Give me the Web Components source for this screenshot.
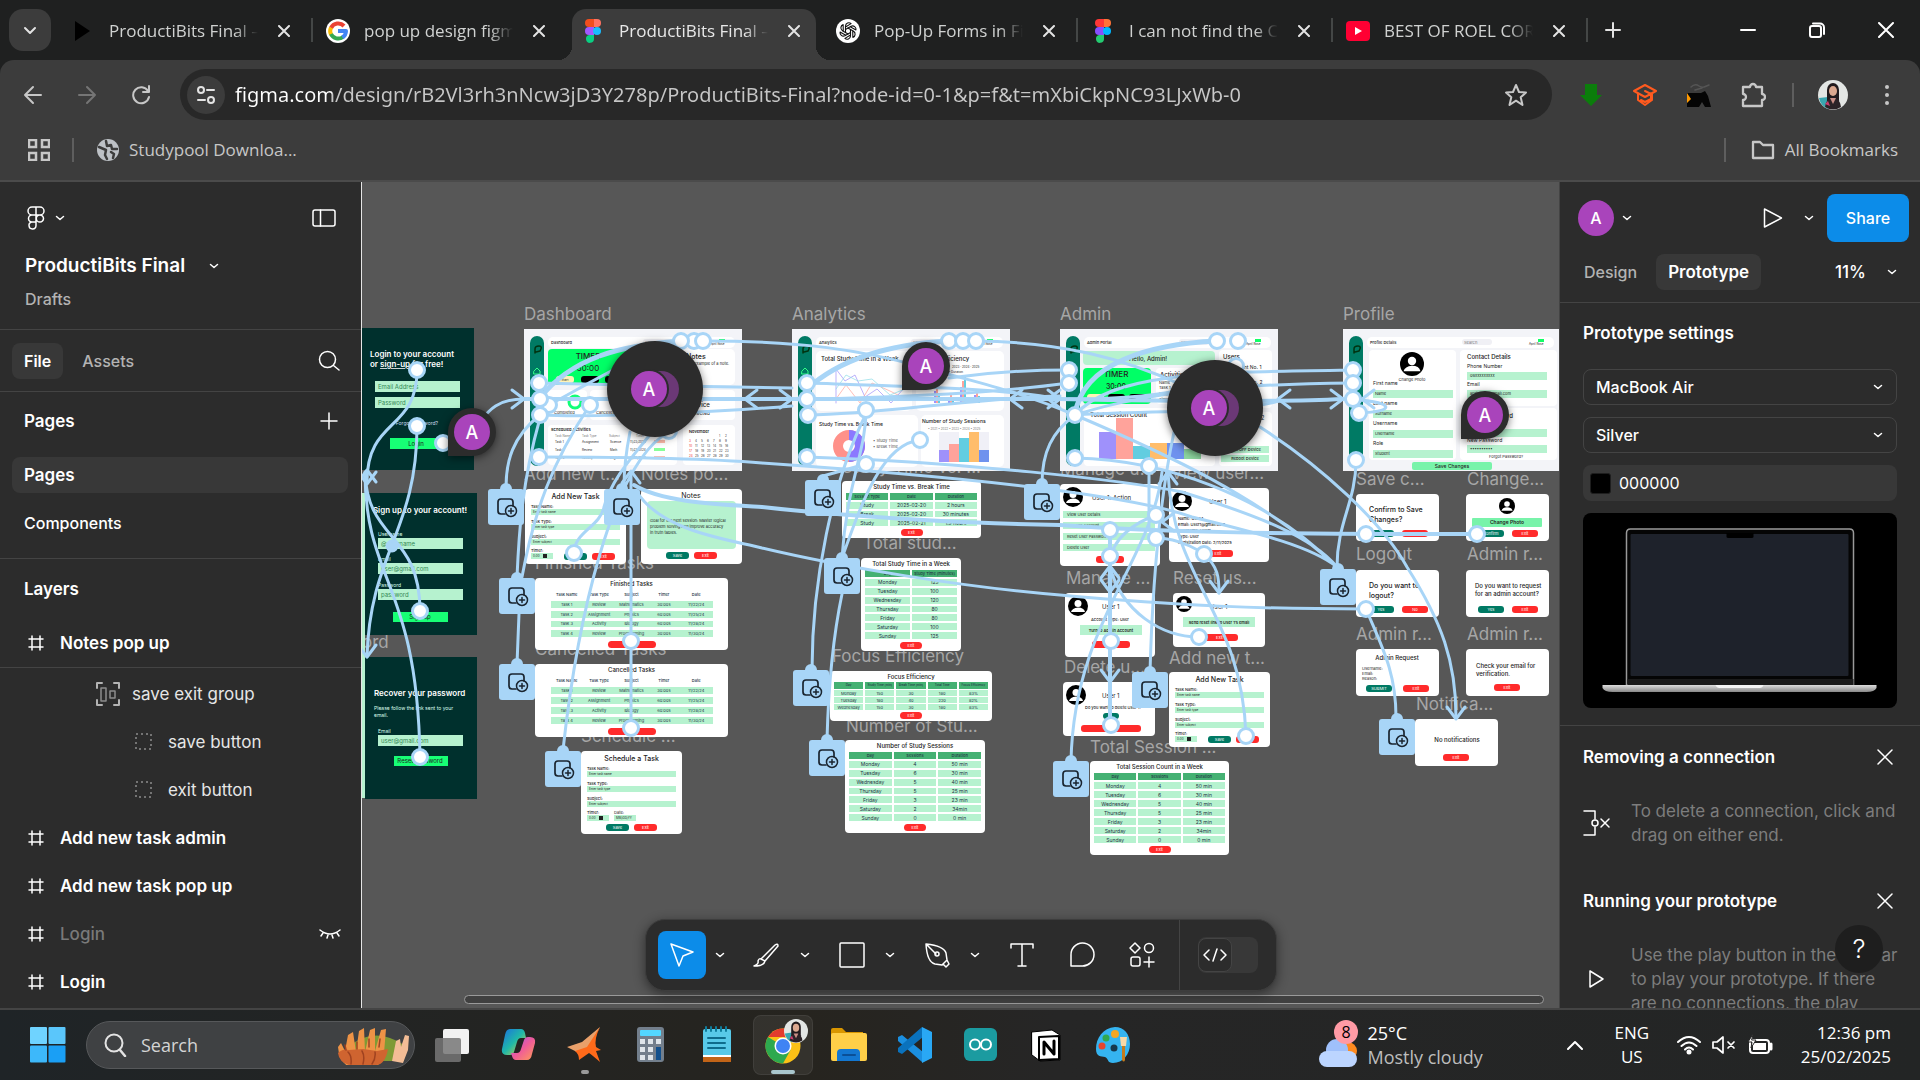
<!DOCTYPE html>
<html lang="en">
<head>
<meta charset="utf-8">
<title>ProductiBits Final – Figma</title>
<style>
html,body{margin:0;height:100%}
body{display:flex;flex-direction:column;height:100vh;overflow:hidden;background:#2c2c2c;color:#fff;font-family:"Open Sans","Noto Sans",sans-serif}
</style>
</head>
<body>
<browser-tabs></browser-tabs>
<browser-toolbar></browser-toolbar>
<bookmark-bar></bookmark-bar>
<figma-app></figma-app>
<task-bar></task-bar>
<script>
const BASE = `:host,*{box-sizing:border-box}:host{flex:none}button{font:inherit;color:inherit;background:none;border:0;padding:0;margin:0;display:flex;align-items:center;justify-content:center;flex:none}svg{display:block;flex:none}section{flex:none}h1,h2,h3,p,ul{margin:0;padding:0;font-size:inherit;font-weight:inherit}li{list-style:none}`;
const define = (name, css, html) => customElements.define(name, class extends HTMLElement {
  constructor(){ super(); this.attachShadow({mode:'open'}); }
  connectedCallback(){
    if (this.shadowRoot.childNodes.length) return;
    const t = document.createElement('template');
    t.innerHTML = `<style>${BASE}${css}</style>` + (typeof html === 'function' ? html(this) : html);
    this.shadowRoot.append(t.content.cloneNode(true));
  }
});
const svg = (w, h, body, vb) => `<svg width="${w}" height="${h}" viewBox="${vb || `0 0 ${w} ${h}`}" fill="none" stroke-linecap="round" stroke-linejoin="round" aria-hidden="true">${body}</svg>`;

/* ---------- shared icons ---------- */
const FIG = (a,b,c,d,e) => `<path fill="${a}" d="M10 0H5a4 4 0 000 8h5z"/><path fill="${b}" d="M10 0h3a4 4 0 010 8h-3z"/><path fill="${c}" d="M10 8H5a4 4 0 000 8h5z"/><circle fill="${d}" cx="13" cy="12" r="4"/><path fill="${e}" d="M5 16h5v4a4 4 0 11-5-4z"/>`;
const FACE = `<circle cx="15" cy="15" r="15" fill="#e3e6e4"/><path d="M1 18a15 15 0 009 11V17z" fill="#3aa6b0"/><path d="M9 24V10a6 7 0 0112 0v14z" fill="#211a1d"/><ellipse cx="15" cy="11" rx="4" ry="5" fill="#dba88f"/><path d="M7 27q1-9 8-9t8 9a15 15 0 01-16 0z" fill="#2b2327"/><path d="M12 18h6l-3 6z" fill="#c98f86"/><path d="M7 24l3-3 2 5z" fill="#cf3d70"/>`;
const ICONS = {
  play: svg(18,24,`<path fill="#000" d="M1 2l15 10L1 22z"/>`),
  google: svg(24,24,`<circle cx="12" cy="12" r="12" fill="#fff"/><g stroke-width="4" stroke-linecap="butt"><path stroke="#ea4335" d="M18 7A8 8 0 005 9"/><path stroke="#fbbc05" d="M5 8.500a8 8 0 000 7"/><path stroke="#34a853" d="M5 15a8 8 0 0012 3"/><path stroke="#4285f4" d="M16.500 18.500A8 8 0 0020 12h-8"/></g>`),
  figma: svg(18,24,FIG('#f24e1e','#ff7262','#a259ff','#1abcfe','#0acf83')),
  figma2: svg(18,24,FIG('#ff3737','#ff7237','#874fff','#00b6ff','#24cb71')),
  gpt: svg(24,24,`<circle cx="12" cy="12" r="12" fill="#fff"/><g stroke="#111" stroke-width="1.100">${[0,60,120,180,240,300].map(a=>`<path transform="rotate(${a} 12 12)" d="M9.500 13.500V7a3.400 3.400 0 015.600-2.400L9.500 8"/>`).join('')}</g>`),
  yt: svg(24,20,`<rect width="24" height="20" rx="4" fill="#f03"/><path fill="#fff" d="M9 6l7 4-7 4z"/>`)
};
define('chevron-down', `:host{display:block}`, el => svg(10,6,`<path d="M1.500 1.500L5 4.500l3.500-3" stroke="${el.getAttribute('color')||'#fff'}" stroke-width="1.500"/>`));

/* ---------- browser chrome ---------- */
define('browser-tab', `
:host{display:flex;align-items:center;width:255px;height:51px;padding:0 18px 0 15px;position:relative;color:#d0d2d1;font-size:17px}
:host([active]){color:#e8e8e8}
:host([active])::before{content:"";position:absolute;inset:0 7px 0 4px;background:#3c3c3c;border-radius:14px 14px 0 0}
:host([active])::after{content:"";position:absolute;left:-10px;right:-7px;bottom:0;height:14px;background:radial-gradient(circle at 0 0,transparent 14px,#3c3c3c 14px) left/14px 14px no-repeat,radial-gradient(circle at 14px 0,transparent 14px,#3c3c3c 14px) right/14px 14px no-repeat}
:host([sep])::after{content:"";position:absolute;right:0;top:9px;width:2px;height:24px;background:#444746}
.icon{width:20px;display:flex;justify-content:center;position:relative}
.title{flex:1;white-space:nowrap;overflow:hidden;margin:0 15px 0 16px;position:relative;line-height:26px;-webkit-mask-image:linear-gradient(90deg,#000 84%,transparent)}
button{width:22px;height:22px;position:relative}
.icon,.title,button{top:-4px}`,
 el => `<span class="icon">${ICONS[el.getAttribute('icon')]}</span><span class="title"><slot></slot></span><button aria-label="Close tab">${svg(12,12,'<path d="M1 1l10 10M11 1L1 11" stroke="#e3e3e3" stroke-width="2"/>')}</button>`);

define('browser-tabs', `
:host{display:flex;height:74px;margin-bottom:-14px;background:#1f2020;padding:9px 0 0 9px;align-items:flex-start}
.menu{width:42px;height:42px;border-radius:14px;background:#3c3c3c;margin-right:7px}
.plus{width:36px;height:42px;margin-left:7px}
.win{margin-left:auto;display:flex}.win button{width:69px;height:42px}`,
`<button class="menu" aria-label="Search tabs">${svg(14,9,'<path d="M2 2l5 5 5-5" stroke="#e3e3e3" stroke-width="2"/>')}</button>
<browser-tab icon="play" sep>ProductiBits Final – Figma</browser-tab><browser-tab icon="google">pop up design figma</browser-tab><browser-tab icon="figma" active>ProductiBits Final – Figma</browser-tab><browser-tab icon="gpt" sep>Pop-Up Forms in Figma</browser-tab><browser-tab icon="figma2" sep>I can not find the Close</browser-tab><browser-tab icon="yt" sep>BEST OF ROEL CORTEZ</browser-tab>
<button class="plus" aria-label="New tab">${svg(16,16,'<path d="M8 1v14M1 8h14" stroke="#e3e3e3" stroke-width="2"/>')}</button>
<div class="win"><button aria-label="Minimise">${svg(16,16,'<path d="M1 8h14" stroke="#fff" stroke-width="2"/>')}</button><button aria-label="Restore">${svg(16,16,'<rect x="1" y="4" width="11" height="11" rx="2" stroke="#fff" stroke-width="2"/><path d="M4 1.500h7a4 4 0 014 4V12" stroke="#fff" stroke-width="2"/>')}</button><button aria-label="Close">${svg(16,16,'<path d="M1 1l14 14M15 1L1 15" stroke="#fff" stroke-width="2"/>')}</button></div>`);

define('browser-toolbar', `
:host{display:flex;align-items:center;height:69px;background:#3c3c3c;border-radius:14px 14px 0 0;padding:0 6px;z-index:1}
.nav{width:54px;height:44px}
.box{flex:1;display:flex;align-items:center;height:51px;border-radius:26px;background:#282828;margin:0 12px;padding:0 24px 0 7px}
.site{width:38px;height:38px;border-radius:50%;background:#3c3c3c}
label{flex:1;display:flex}
input{flex:1;margin:0 0 0 10px;padding:0;border:0;height:32px;font:20px "Noto Sans",sans-serif;color:#c7c7c7;background:linear-gradient(90deg,#fff 97px,#c7c7c7 97px);-webkit-background-clip:text;background-clip:text;-webkit-text-fill-color:transparent;outline:0}
.ext{width:54px;height:44px}.sep{width:2px;height:24px;background:#5e5e5e;margin:0 12px}`,
`<button class="nav" aria-label="Back">${svg(20,20,'<path d="M18 10H2M10 2l-8 8 8 8" stroke="#c7c7c7" stroke-width="2"/>')}</button>
<button class="nav" aria-label="Forward">${svg(20,20,'<path d="M2 10h16M10 2l8 8-8 8" stroke="#757575" stroke-width="2"/>')}</button>
<button class="nav" aria-label="Reload">${svg(20,20,'<path d="M17 6a8 8 0 101 6M18 1v6h-6" stroke="#c7c7c7" stroke-width="2"/>')}</button>
<div class="box"><button class="site" aria-label="Site information">${svg(20,20,'<g stroke="#e3e3e3" stroke-width="2"><circle cx="5" cy="5" r="3"/><path d="M11 5h7M2 15h7"/><circle cx="15" cy="15" r="3"/></g>')}</button><label><input aria-label="Address" value="figma.com/design/rB2Vl3rh3nNcw3jD3Y278p/ProductiBits-Final?node-id=0-1&amp;p=f&amp;t=mXbiCkpNC93LJxWb-0"></label><button aria-label="Bookmark">${svg(24,24,'<path d="M12 2l3 7 7 .600-5.300 4.700L18.500 22 12 17.700 5.500 22l1.800-7.700L2 9.600 9 9z" stroke="#c7c7c7" stroke-width="2"/>')}</button></div>
<button class="ext" aria-label="Downloader">${svg(24,24,'<path d="M6 1h12v11h5L12 23 1 12h5z" fill="#0b7d0b"/>')}</button>
<button class="ext" aria-label="Studypool">${svg(26,22,'<path d="M13 1l11 6-11 6L2 7zM6 10v6l7 5 7-5v-6M13 7l6 3v5l-6 3-4-2" stroke="#ff5a1f" stroke-width="2"/>')}</button>
<button class="ext" aria-label="Helper">${svg(26,26,'<path d="M1 11h14l4-2 3 5 3 11h-6l-3-5-3 5H1z" fill="#050505"/><path d="M1 11l4 6-4 4z" fill="#f90"/><path d="M5 5q4-4 8-1t10-1M18 5l5-2M9 8l7-2" stroke="#555" stroke-width="1.500"/>')}</button>
<button class="ext" aria-label="Extensions">${svg(26,26,'<path d="M3 5h7a3 3 0 016 0h6v7a3 3 0 010 6v6H3v-6a3 3 0 000-6z" stroke="#c7c7c7" stroke-width="2.300"/>')}</button>
<span class="sep"></span><button class="ext" aria-label="Profile">${svg(30,30,FACE)}</button><button class="ext" aria-label="Menu">${svg(6,22,'<g fill="#c7c7c7"><circle cx="3" cy="3" r="2"/><circle cx="3" cy="11" r="2"/><circle cx="3" cy="19" r="2"/></g>')}</button>`);

define('bookmark-bar', `
:host{display:flex;align-items:center;height:53px;background:#3c3c3c;padding:0 22px 10px 28px;border-bottom:2px solid #4b4b4b;font-size:17px;color:#c7c7c7}
.sep{width:2px;height:24px;background:#5e5e5e}a{display:flex;align-items:center;gap:10px;color:inherit;text-decoration:none}`,
`<button aria-label="Apps">${svg(22,22,'<g stroke="#c7c7c7" stroke-width="2.500" stroke-linejoin="miter"><rect x="1" y="1" width="7" height="7"/><rect x="14" y="1" width="7" height="7"/><rect x="1" y="14" width="7" height="7"/><rect x="14" y="14" width="7" height="7"/></g>')}</button>
<span class="sep" style="margin:0 23px 0 22px"></span><a href="#">${svg(22,22,'<circle cx="11" cy="11" r="11" fill="#bdc1c6"/><path d="M2 8l7 3-1 5 2 4M9 2l1 5 4-1 1 4h5M14 13l3 2-1 4" stroke="#3c3c3c" stroke-width="2.500"/>')}<span>Studypool Downloa...</span></a>
<span class="sep" style="margin:0 25px 0 auto"></span><a href="#">${svg(24,20,'<path d="M2 2h7l3 3h10v13H2z" stroke="#c7c7c7" stroke-width="2.300"/>')}<span>All Bookmarks</span></a>`);

/* ---------- left panel ---------- */
const HASH = svg(24,24,'<path d="M8 5v14M16 5v14M5 8h14M5 16h14" stroke="#fff" stroke-width="1.500"/>');
const DASH = svg(24,24,'<rect x="4" y="4" width="15" height="15" stroke="#8c8c8c" stroke-width="1.500" stroke-dasharray="2 3" stroke-linecap="butt"/>');
const GROUP = svg(24,24,'<path d="M1 6V1h5M18 1h5v5M23 18v5h-5M6 23H1v-5" stroke="#b3b3b3" stroke-width="2"/><rect x="5" y="6" width="5" height="13" stroke="#8c8c8c" stroke-width="1.500"/><rect x="14" y="9" width="5" height="7" stroke="#8c8c8c" stroke-width="1.500"/>');
define('layer-row', `
:host{display:flex;align-items:center;height:48px;padding:0 20px 0 calc(24px + var(--indent,0px));gap:12px;font-size:17px;font-weight:400;color:#e6e6e6}
:host([top]){font-weight:600;color:#fff}:host([dim]){color:#7a7a7a;font-weight:500}
button{flex:1;justify-content:flex-start;white-space:nowrap}`,
 el => ({hash:HASH,dash:DASH,group:GROUP})[el.getAttribute('icon')] + `<button><slot></slot></button>` + (el.hasAttribute('dim') ? svg(22,12,'<path d="M1 2q10 8 20 0M4 5L2 8M9 7l-1 3M13 7l1 3M18 5l2 3" stroke="#fff" stroke-width="1.500"/>') : ''));

define('left-panel', `
:host{display:flex;flex-direction:column;width:362px;background:#2c2c2c;border-right:1px solid #e6e6e6;font:16px/24px Inter,sans-serif;overflow:hidden}
section{border-bottom:1px solid #444}
.head{height:148px;padding:18px 25px 0 25px}.row{display:flex;align-items:center}
.row button{height:36px}h1{font-size:19px;font-weight:600}h2{font-size:17px}
.sub{color:#b3b3b3;font-weight:500;padding-top:3px}
.tabs{display:flex;align-items:center;height:62px;padding:0 21px 0 12px;font-weight:500;color:#b3b3b3;gap:7px}
.tabs button{height:36px;padding:0 12px;border-radius:8px}.tabs .on{background:#383838;color:#fff;font-weight:600}
.pages{height:167px;padding:0 13px 0 12px}.pages .row{height:58px;padding:0 10px 0 12px;font-weight:600;justify-content:space-between}
.pages .pg{width:100%;height:36px;margin:7px 0 12px;justify-content:flex-start;padding:0 12px;border-radius:8px;font-weight:500}
.pages .on{background:#383838;font-weight:600;font-size:17px}
.layers{height:109px;font-weight:600}.layers h2{padding:18px 24px 18px}
ul{flex:1;padding-top:2px;overflow:hidden}`,
`<section class="head"><div class="row"><button aria-label="Main menu">${svg(22,24,'<path d="M11 1H7a4 4 0 000 8h4zM11 1h4a4 4 0 010 8h-4zM11 9H7a3.500 3.500 0 000 7h4zM7 16a3.500 3.500 0 104 3.500V9M18.500 12.500a3.600 3.600 0 11-7.200 0 3.600 3.600 0 017.200 0z" stroke="#fff" stroke-width="1.500"/>')}<chevron-down style="margin-left:8px"></chevron-down></button><span style="flex:1"></span><button aria-label="Minimise UI">${svg(24,18,'<rect x="1" y="1" width="22" height="16" rx="2" stroke="#fff" stroke-width="1.500"/><path d="M8.500 1v16" stroke="#fff" stroke-width="1.500"/>')}</button></div>
<div class="row" style="padding-top:12px"><h1>ProductiBits Final</h1><button aria-label="File menu" style="margin-left:24px"><chevron-down></chevron-down></button></div><p class="sub">Drafts</p></section>
<section class="tabs"><button class="on">File</button><button>Assets</button><span style="flex:1"></span>${svg(22,22,'<circle cx="9.500" cy="9.500" r="8" stroke="#fff" stroke-width="1.500"/><path d="M15.500 15.500L21 20" stroke="#fff" stroke-width="1.500"/>')}</section>
<section class="pages"><div class="row"><h2>Pages</h2><button aria-label="Add page">${svg(18,18,'<path d="M9 1v16M1 9h16" stroke="#fff" stroke-width="1.500"/>')}</button></div><button class="pg on">Pages</button><button class="pg">Components</button></section>
<section class="layers"><h2>Layers</h2><layer-row icon="hash" top>Notes pop up</layer-row></section>
<ul><layer-row icon="group" style="--indent:72px">save exit group</layer-row><layer-row icon="dash" style="--indent:108px">save button</layer-row><layer-row icon="dash" style="--indent:108px">exit button</layer-row><layer-row icon="hash" top>Add new task admin</layer-row><layer-row icon="hash" top>Add new task pop up</layer-row><layer-row icon="hash" top dim>Login</layer-row><layer-row icon="hash" top>Login</layer-row></ul>`);

/* ---------- right panel ---------- */
define('select-box', `
:host{display:flex;position:relative;height:36px;margin-bottom:12px}
select{appearance:none;flex:1;background:none;border:1px solid #444;border-radius:8px;color:#fff;font:500 16px Inter,sans-serif;padding:0 12px}
chevron-down{position:absolute;right:14px;top:15px}`,
 el => `<select aria-label="${el.getAttribute('label')}"><option>${el.getAttribute('value')}</option></select><chevron-down></chevron-down>`);
define('hint-block', `
:host{display:block;height:144px}
header{display:flex;align-items:center;justify-content:space-between;height:36px;padding:0 23px;font-size:17px;font-weight:600}
header button{width:24px;height:24px}
div{display:flex;align-items:center;padding:24px 0 0 23px;color:#7d7d7d;font-size:17px}
p{width:270px;margin-left:20px}`,
 el => `<header><h3>${el.getAttribute('heading')}</h3><button aria-label="Dismiss">${svg(16,16,'<path d="M1 1l14 14M15 1L1 15" stroke="#fff" stroke-width="1.500"/>')}</button></header><div>${el.getAttribute('icon')==='cut' ? svg(28,26,'<g stroke="#fff" stroke-width="1.500"><path d="M1 1h11v8M12 17v8H1"/><circle cx="12" cy="13" r="3"/><path d="M18 9l8 8M26 9l-8 8"/></g>') : svg(28,26,'<path d="M7 5v16l13-8z" stroke="#fff" stroke-width="1.500"/>')}<p><slot></slot></p></div>`);
define('right-panel', `
:host{display:flex;flex-direction:column;width:361px;background:#2c2c2c;border-left:1px solid #444;font:16px/24px Inter,sans-serif;overflow:hidden;position:relative}
.top{display:flex;align-items:center;height:72px;padding:0 11px 0 18px;flex:none}
.av{width:36px;height:36px;border-radius:50%;background:#a944bb;font-weight:500}
.share{width:82px;height:48px;border-radius:8px;background:#0c8ce9;font-weight:500;margin-left:13px}
.tabs{display:flex;align-items:center;height:49px;padding:0 23px 12px 12px;border-bottom:1px solid #444;font-weight:500;color:#b3b3b3;flex:none}
.tabs button{height:36px;padding:0 12px;border-radius:8px}.tabs .on{background:#383838;color:#fff;font-weight:600;margin-left:7px;font-size:17px}
.set{padding:18px 23px 17px 23px;border-bottom:1px solid #444;height:423px}h2{font-size:17px;font-weight:600;margin-bottom:24px}
.col{display:flex;align-items:center;height:36px;border-radius:8px;background:#383838;padding-left:7px;margin-bottom:12px}
.sw{width:21px;height:21px;border-radius:3px;background:#000;border:1px solid #1e1e1e}
input{flex:1;min-width:0;background:none;border:0;color:#fff;font:16px Inter,sans-serif;padding:0 8px}
.prev{background:#000;border-radius:8px;height:195px}.prev svg{width:100%}
hint-block:first-of-type{margin-top:13px}
.help{position:absolute;right:37px;bottom:35px;width:48px;height:48px;border-radius:50%;background:#1e1e1e;font-size:26px;font-weight:300}`,
`<div class="top"><button class="av" aria-label="Account">A</button><chevron-down style="margin-left:8px"></chevron-down><span style="flex:1"></span><button aria-label="Present">${svg(20,22,'<path d="M1.500 2v18L18.500 11z" stroke="#fff" stroke-width="1.500"/>')}</button><chevron-down style="margin-left:21px"></chevron-down><button class="share">Share</button></div>
<div class="tabs"><button>Design</button><button class="on">Prototype</button><span style="flex:1"></span><span style="color:#fff;font-size:17px">11%</span><chevron-down style="margin-left:21px"></chevron-down></div>
<section class="set"><h2>Prototype settings</h2><select-box label="Device" value="MacBook Air"></select-box><select-box label="Colour" value="Silver"></select-box>
<label class="col"><span class="sw"></span><input aria-label="Background" value="000000"></label>
<div class="prev">${svg(313,195,`<defs><linearGradient id="b" x2="0" y2="1"><stop stop-color="#ddd"/><stop offset="1" stop-color="#888"/></linearGradient></defs><path d="M43 172V20q0-4 4-4h219q4 0 4 4v152z" fill="#050505" stroke="#999" stroke-width="1.500"/><rect x="47" y="21" width="218" height="142" rx="1" fill="#1e222b"/><path d="M143 20h27v4q0 1-2 1h-23q-2 0-2-1z" fill="#000"/><rect x="44" y="166" width="226" height="6" fill="#1b1b1b"/><path d="M19 172h274v3q-2 4-10 4H29q-8 0-10-4z" fill="url(#b)"/><path d="M132 172h48q-1 3-4 3h-40q-3 0-4-3z" fill="#f4f4f4"/>`)}</div></section>
<hint-block heading="Removing a connection" icon="cut">To delete a connection, click and drag on either end.</hint-block>
<hint-block heading="Running your prototype" icon="play">Use the play button in the toolbar to play your prototype. If there are no connections, the play</hint-block>
<button class="help" aria-label="Help">?</button>`);

/* ---------- canvas: drawing helpers ---------- */
const G='#b6f2cf', DG='#007a64', RED='#ff2b2b', WIRE='#a8d5f7';
const T=(x,y,s,z,o={})=>`<text x="${x}" y="${y}" font-size="${z}" fill="${o.f||'#222'}" text-anchor="${o.a||'start'}" font-weight="${o.w||400}">${s}</text>`;
const M=(x,y,s,z,o={})=>T(x,y,s,z,{...o,a:'middle'});
const R=(x,y,w,h,f,r=0)=>`<rect x="${x}" y="${y}" width="${w}" height="${h}" rx="${r}" fill="${f}"/>`;
const USER=(x,y,r)=>`<circle cx="${x}" cy="${y}" r="${r}" fill="#000"/><circle cx="${x}" cy="${y-r*.250}" r="${r*.350}" fill="#fff"/><path d="M${x-r*.700} ${y+r*.600}q${r*.100} ${-r*.400} ${r*.700} ${-r*.450}q${r*.600} 0 ${r*.700} ${r*.450}z" fill="#fff"/>`;
const PILL=(x,y,w,s,f)=>R(x,y,w,7,f,3)+M(x+w/2,y+5,s,4,{f:'#fff'});
const shell=t=>R(6,7,14,130,DG,7)+`<path d="M11 24v-4q0-3 4-3t1 5l-4 1" stroke="#031" stroke-width="1.500"/><path d="M10 42l3-3 3 3v3h-6z" stroke="#3f8" stroke-width="1"/>`+R(24,8,187,11,'#fff',5)+T(27,15,t,4,{w:500})+R(119,10,30,6,'#f0f0f5',3)+T(121,15,'Search',4,{f:'#777'})+R(195,10,6,3,'#1f6')+T(186,16,'April Rose',3);
const form=(title,w,date)=>M(w/2,10,title,7,{w:500})+[['Task Name:','Enter task name'],['Task Type:','Enter task type'],['Subject:','Enter subject']].map((r,i)=>T(6,19+i*15,r[0],4,{w:500})+R(6,20+i*15,w-12,6,G)+T(8,24+i*15,r[1],3)).join('')+T(6,63,'Timer:',4,{w:500})+R(6,64,22,6,G)+T(8,68,'0:00',3)+R(18,65,4,4,'#222')+(date?T(33,63,'Date:',4)+R(33,64,22,6,G)+T(35,68,'MM/DD/YY',3)+PILL(25,73,23,'Save',DG)+PILL(53,73,23,'Exit',RED):PILL(39,64,23,'Save',DG)+PILL(67,64,23,'Exit',RED));
const login=(w,parts)=>R(0,0,w,142,'#00302d')+parts;
const field=(x,y,s,l)=>R(x,y,85,11,G)+T(x+3,y+8,s,6,{f:'#385'})+(l?T(x,y-2,l,5,{f:'#dfe'}):'');

const bars=(x,base,w,hs)=>hs.map((h,i)=>R(x+i*w,base-h,w,h,['#9f91fb','#ffa39b','#62cde0','#ffbd6b','#6f92ee','#8ed8a0'][i])).join('');
const chart=x=>`<g transform="translate(${x})"><path d="M0 74V40l9 12 10-6 10 22 12-8 14 14 14-16" stroke="#9f91fb" stroke-width=".7"/><path d="M0 70l10-14 14 18 12-20 18 8 16 8" stroke="#ffa39b" stroke-width=".7"/><path d="M0 60l10-14 12 6 14-2 18 16 20-8" stroke="#8cdbe6" stroke-width=".7"/></g>`;
const ART = {
 login: login(112,M(50,29,'Login to your account',8,{f:'#fff',w:600})+T(8,39,'or <tspan text-decoration="underline">sign-up</tspan> for free!',8,{f:'#fff',w:600})+field(13,53,'Email Address')+field(13,69,'Password')+M(55,97,'Forgot password?',5,{f:'#cde'})+R(28,110,54,11,'#17ff75')+M(54,118,'Login',6)),
 signup: login(112,M(55,20,'Sign up to your account!',8,{f:'#fff',w:600})+field(13,45,'@username','Username')+field(13,70,'user@gmail.com','Email')+field(13,96,'password','Password')+R(28,119,55,10,'#17ff75')+M(55,126,'Sign up',6)),
 recover: login(112,T(9,39,'Recover your password',8,{f:'#fff',w:600})+T(9,53,'Please follow the link sent to your',5,{f:'#dfe'})+T(9,60,'email.',5,{f:'#dfe'})+field(13,78,'user@gmail.com','Email')+R(29,99,54,10,'#17ff75')+M(55,106,'Reset password',6)),
 dashboard: R(0,0,218,142,'#f3f4f8')+shell('Dashboard')+R(24,20,96,36,'#0f6',4)+M(64,30,'TIMER',8,{w:500})+M(64,42,'30:00',8)+R(32,47,18,7,'#fff3b8',3)+M(41,52,'Start',3)+R(57,47,18,7,'#000',3)+R(81,47,18,7,'#000',3)+R(124,20,87,36,'#fff',5)+T(162,30,'Notes',7,{w:500})+T(164,36,'An example of a note.',4)+R(24,61,39,30,'#fff',4)+R(66,61,84,30,'#fff',4)+R(153,61,58,30,'#fff',4)+T(166,78,'Device',6,{w:500})+T(160,86,'Connected',5)+T(30,85,'Completed',4)+T(72,85,'Cancelled tasks',4)+`<circle cx="51" cy="73" r="6" stroke="#1f7" stroke-width="3"/>`+R(24,96,129,40,'#fff',4)+T(27,102,'Scheduled Activities',4,{w:600})+['Task Name','Task Type','Subject','Timer'].map((s,i)=>T(31+i*27,108,s,3,{f:'#777'})).join('')+['Task 1','Task 2','Task 3'].map((s,i)=>T(31,114+i*8,s,3)+T(58,114+i*8,['Assignment','Review','Activity'][i],3)+T(86,114+i*8,['Science','Math','English'][i],3)+T(106,114+i*8,'11/23/2024',3)+R(130,111+i*8,11,3,i==1?'#8f9':'#fba')).join('')+R(159,96,52,40,'#fff',4)+T(165,104,'November',4,{w:600})+[0,1,2,3,4].map(r=>[0,1,2,3,4,5,6].map(c=>r*7+c>4?T(165+c*6,108+r*5,r*7+c-4,3,{f:c?'#333':'#e22'}):'').join('')).join(''),
 analytics: R(0,0,218,142,'#f3f4f8')+shell('Analytics')+R(24,22,96,60,'#fff',5)+T(29,32,'Total Study Time in a Week',6,{w:500})+chart(44)+R(124,22,88,60,'#fff',5)+T(130,32,'Focus Efficiency',6,{w:500})+T(160,39,'2023 · 2024 · 2025',3)+T(130,44,'Study Times, Active Duration',3)+bars(142,74,2,[12,14,8])+bars(156,74,2,[6,8,5])+bars(168,74,2,[16,22,26])+bars(182,74,2,[8,10,7])+R(24,86,102,52,'#fff',5)+T(27,97,'Study Time vs. Break Time',5,{w:500})+`<circle cx="57" cy="117" r="11" stroke="#ff918a" stroke-width="10"/><path d="M57 106a11 11 0 010 22" stroke="#8b78ff" stroke-width="10" stroke-linecap="butt"/>`+T(81,113,'• Study Time',4,{f:'#555'})+T(81,119,'• Break Time',4,{f:'#555'})+R(129,86,83,52,'#fff',5)+T(130,94,'Number of Study Sessions',5,{w:500})+T(136,101,'• 2021  • 2022  • 2023  • 2024  • 2025',3,{f:'#777'})+R(147,103,20,30,'#f0f0f7')+R(187,103,10,30,'#f0f0f7')+bars(147,133,10,[12,18,24,30,12]),
 admin: R(0,0,218,142,'#f3f4f8')+shell('Admin Portal')+R(23,22,132,14,G,4)+M(88,32,'Hello, Admin!',6,{w:500})+R(23,39,68,36,'#0f6',4)+M(56,48,'TIMER',8,{w:500})+M(56,60,'30:00',7,{w:500})+R(27,65,17,7,'#fff3b8',3)+R(48,65,17,7,'#000',3)+R(69,65,17,7,'#000',3)+R(96,39,59,36,'#fff',4)+T(100,48,'Activities',6,{w:500})+T(99,55,'Name',4)+T(99,60,'Task 1',4)+T(99,66,'Subject',4)+T(99,72,'Time',4)+R(24,79,131,58,'#fff',4)+T(30,88,'Total Session Count',6,{w:500})+bars(39,130,17,[27,41,13,16,16,10])+R(159,21,53,58,'#fff',4)+T(163,30,'Users',6,{w:500})+T(170,40,'Student No. 1',5)+T(170,55,'Student No. 2',5)+R(159,83,53,54,'#fff',4)+T(168,91,'Device No. 2',6)+R(161,117,48,7,G)+M(185,122,'Turn OFF Device',4,{w:500})+R(161,126,48,7,G)+M(185,131,'Reboot Device',4,{w:500}),
 profile: R(0,0,218,142,'#f3f4f8')+shell('Profile Details')+R(26,21,87,110,'#fff',4)+USER(69,35,12)+M(69,52,'Change Photo',4)+[['First name','Name'],['Last name','Surname'],['Username','Username'],['Role','Student']].map((r,i)=>T(30,56+i*20,r[0],5)+R(30,61+i*20,80,8,G)+T(32,66+i*20,r[1],4)).join('')+R(117,21,97,56,'#fff',4)+T(124,30,'Contact Details',6,{w:500})+T(124,39,'Phone Number',5)+R(124,43,80,8,G)+T(127,48,'09xxxxxxxxx',4)+T(124,57,'Email',5)+R(124,61,80,8,G)+T(127,66,'april.rose@gmail.com',4)+R(117,79,97,52,'#fff',4)+T(118,89,'Change Password',6,{w:500})+R(124,100,80,8,G)+T(124,113,'New Password',5)+R(124,116,80,8,G)+T(127,121,'••••••••••',4)+M(163,129,'Forgot Password?',4)+R(69,133,80,8,'#78f3aa',2)+M(109,139,'Save Changes',5,{w:500}),
 addtask: form('Add New Task',101), schedule: form('Schedule a Task',101,1),
 notes: M(50,9,'Notes',7)+R(6,12,89,48,G,4)+['Goal for the next session: Master logical','problem solving and improve accuracy','in truth tables.'].map((s,i)=>T(9,33+i*6,s,4)).join('')+PILL(25,63,23,'Save',DG)+PILL(53,63,23,'Exit',RED),
 useraction: USER(13,13,10)+T(32,16,'User 1: Action',6)+['View User Details','Manage Account','Reset User Password','Delete User'].map((s,i)=>R(3,27+i*11,92,7,G)+T(7,32+i*11,s,4)).join('')+PILL(36,72,28,'Exit',RED),
 viewuser: USER(13,13,10)+T(40,16,'User 1',6)+['Name: User 1','Email: User1@gmail.com','Username: User1','Type: User','Registration Date: 2/11/2025'].map((s,i)=>T(9,32+i*6,s,4,{w:500})).join('')+PILL(34,62,30,'Exit',RED),
 manage: USER(13,13,10)+T(37,16,'User 1',6)+M(45,28,'Account Type: User',4,{w:500})+R(15,32,62,10,G)+M(46,39,'Turn to Admin Account',4,{w:600})+PILL(27,48,38,'Exit',RED),
 reset: USER(11,11,8)+T(37,16,'User 1',6)+R(10,24,72,10,G)+M(46,31,'Send reset link to User 1’s email',4,{w:600})+PILL(28,41,37,'Exit',RED),
 del: USER(13,13,10)+T(39,16,'User 1',6)+T(22,27,'Do you want to delete User 1?',4,{w:500})+R(40,31,16,6,DG,3)+PILL(18,43,60,'',RED),
 confirm: T(13,18,'Confirm to Save',7,{w:500})+T(13,28,'Changes?',7,{w:500})+PILL(12,36,26,'Yes',DG)+PILL(46,36,26,'No',RED),
 photo: USER(41,12,8)+R(6,24,70,9,'#78f3aa',1)+M(41,30,'Change Photo',5,{w:600})+PILL(12,36,26,'Confirm',DG)+PILL(46,36,26,'Exit',RED),
 logout: T(13,18,'Do you want to',7,{w:500})+T(13,28,'logout?',7,{w:500})+PILL(12,36,26,'Yes',DG)+PILL(46,36,26,'No',RED),
 request: T(9,18,'Do you want to request',6,{w:500})+T(9,26,'for an admin account?',6,{w:500})+PILL(12,36,26,'Yes',DG)+PILL(46,36,26,'Exit',RED),
 areq: M(41,11,'Admin Request',6,{w:500})+T(6,21,'Username:',4)+T(6,26,'Email:',4)+T(6,31,'Reason:',4)+PILL(10,36,26,'SUBMIT',DG)+PILL(47,36,26,'Exit',RED),
 check: T(10,19,'Check your email for',6,{w:500})+T(10,27,'verification.',6,{w:500})+PILL(28,35,26,'Exit',RED),
 none: M(42,23,'No notifications',6,{w:500})+PILL(28,35,26,'Exit',RED)
};
const days=['Monday','Tuesday','Wednesday','Thursday','Friday','Saturday','Sunday'];
const sess=days.map((d,i)=>[d,[4,6,5,5,3,2,0][i],['50 min','30 min','40 min','25 min','23 min','34min','0 min'][i]]);
const TABLES={
 finished:{t:'Finished Tasks',h:['Task Name','Task Type','Subject','Timer','Date'],r:[['Task 1','Review','Mathematics','30:00s','11/22/24'],['Task 2','Assignment','Physics','60:00s','11/25/24'],['Task 3','Activity','Biology','60:00s','11/28/24'],['Task 4','Review','Programming','30:00s','11/30/24']],plain:1},
 vs:{t:'Study Time vs. Break Time',h:['Session Type','Date','Duration'],r:[['Study','2025-02-20','2 hours'],['Break','2025-02-20','30 minutes'],['Study','2025-02-21','1.5 hours']]},
 week:{t:'Total Study Time in a Week',h:['Day','Study Time (minutes)'],r:days.map((d,i)=>[d,[125,100,120,80,80,100,125][i]])},
 focus:{t:'Focus Efficiency',h:['Day','Study Time (min)','Break Time (min)','Total Time','Focus Efficiency'],r:[['Monday','150','30','180','83%'],['Tuesday','180','40','220','82%'],['Wednesday','150','30','180','83%']]},
 number:{t:'Number of Study Sessions',h:['Day','Sessions','Duration'],r:sess},
 total:{t:'Total Session Count in a Week',h:['Day','Sessions','Duration'],r:sess}
};
TABLES.cancelled={...TABLES.finished,t:'Cancelled Tasks'};

const place = `:host{position:absolute;left:calc(var(--x)*1px);top:calc(var(--y)*1px);width:calc(var(--w)*1px);height:calc(var(--h)*1px)}`;
define('art-frame', place+`:host{background:#fff;border-radius:4px;overflow:hidden;font-family:Inter,sans-serif}:host([square]){border-radius:0}`,
 el => { const s=getComputedStyle(el), w=+s.getPropertyValue('--w'), h=+s.getPropertyValue('--h'); return svg(w,h,ART[el.getAttribute('art')]); });
define('table-card', place+`
:host{display:flex;flex-direction:column;align-items:center;justify-content:space-between;background:#fff;border-radius:4px;overflow:hidden;color:#234;font:5px/6px Inter,sans-serif;padding:2px}
h3{font-size:6px;line-height:8px;color:#222;font-weight:500}
table{width:100%;flex:1;table-layout:fixed;border-collapse:separate;border-spacing:2px 2px;margin:0 0 1px}
th{background:#45b173;font-weight:500;height:7px;padding:0;font-size:4px;white-space:nowrap}td{background:${G};padding:0;text-align:center;white-space:nowrap}
:host([data=focus]){font-size:4px;line-height:5px}:host([data=focus]) th{font-size:3px}:host([data=focus]) table{border-spacing:2px 1px}
:host([plain]){font-size:4px;line-height:5px}:host([plain]) table{width:162px;border-spacing:0 3px}:host([plain]) th{background:none}
i{width:22px;height:7px;border-radius:4px;background:${RED};color:#fff;font-style:normal;font-size:4px;text-align:center;line-height:7px;flex:none}:host([plain]) i{width:48px}`,
 el => { const d=TABLES[el.getAttribute('data')]; if(d.plain) el.setAttribute('plain',''); return `<h3>${d.t}</h3><table><thead><tr>${d.h.map(x=>`<th>${x}</th>`).join('')}</tr></thead><tbody>${d.r.map(r=>`<tr>${r.map(c=>`<td>${c}</td>`).join('')}</tr>`).join('')}</tbody></table><i>Exit</i>`; });
define('frame-label', `:host{position:absolute;left:calc(var(--x)*1px);top:calc(var(--y)*1px - 10px);font:17px/20px Inter,sans-serif;color:#a6a6a6;white-space:nowrap}`, `<slot></slot>`);
define('overlay-badge', `:host{position:absolute;left:calc(var(--x)*1px);top:calc(var(--y)*1px);width:36px;height:36px}svg{overflow:visible}`,
 svg(36,36,`<circle cx="18" cy="0" r="6" fill="${WIRE}"/><rect width="36" height="36" rx="3" fill="${WIRE}"/><path d="M17 25h-4a3 3 0 01-3-3v-9a3 3 0 013-3h9a3 3 0 013 3v4" stroke="#1a2530" stroke-width="1.700"/><circle cx="23" cy="22" r="5.500" stroke="#1a2530" stroke-width="1.500"/><path d="M23 19.500v5M20.500 22h5" stroke="#1a2530" stroke-width="1.500"/>`));
define('comment-pin', `
:host{position:absolute;left:calc(var(--x)*1px - 24px);top:calc(var(--y)*1px - 24px);width:48px;height:48px;border-radius:24px 24px 24px 0;background:#2c2c2c;box-shadow:0 2px 8px #0008;display:grid;place-items:center;font:500 18px Inter,sans-serif}
:host([many]){width:96px;height:96px;border-radius:48px;left:calc(var(--x)*1px - 48px);top:calc(var(--y)*1px - 48px)}
b,i{width:36px;height:36px;border-radius:50%;background:#a944bb;grid-area:1/1;display:grid;place-items:center;font-weight:500;font-style:normal;position:relative}
i{display:none}:host([many]) i{display:block;background:#6b3876;left:6px}:host([many]) b{right:6px;box-shadow:0 0 0 2px #2c2c2c}`, `<i></i><b>A</b>`);

const arrow=(x,y,a)=>`<path transform="translate(${x} ${y}) rotate(${a})" d="M-12 -9L0 0L-12 9"/>`;
const dots=l=>l.map(([x,y])=>`<circle cx="${x}" cy="${y}" r="7.500" fill="#fff" stroke-width="3"/>`).join('');
define('proto-wires', `:host{position:absolute;inset:0;pointer-events:none;overflow:hidden}`, svg(1198,826,`<g stroke="${WIRE}" stroke-width="3">
<path d="M55 188C55 250 5 235 5 300M55 244C55 350 8 370 5 475M3 290C5 360 58 350 58 429M3 290C3 400 55 400 58 575M81 261C125 258 112 217 162 217"/>
<path stroke-width="4" d="M162 217H698M698 217Q900 221 981 217M272 303C300 320 350 322 400 325C500 336 620 342 698 343C800 350 900 352 1115 352"/>
<path stroke-width="5" d="M177 217C210 175 260 163 319 159M445 207C480 175 530 162 587 159M713 233C720 180 790 162 855 159"/>
<path d="M341 159C440 159 500 168 560 185S650 207 713 233M614 159C700 160 760 176 820 203M187 223C230 200 260 180 319 159"/>
<path d="M177 201C250 203 400 206 430 206M445 201C540 204 640 206 698 217M178 233C250 236 380 228 430 224M446 233C520 232 600 217 698 214M446 217C560 215 640 210 707 201M587 196C630 190 680 188 707 188"/>
<path d="M713 233C750 190 850 190 991 188M713 233C800 205 900 202 991 201M713 233C760 229 880 232 916 219M707 217C760 217 800 214 830 205M997 231C1035 230 1035 219 981 217"/>
<path d="M177 275C260 275 340 276 400 281C560 292 760 310 830 335C900 352 950 365 975 385M445 275C600 280 760 298 820 310C900 335 950 355 975 385M713 276C800 278 900 310 975 385M713 233C800 270 900 315 975 385M275 310C300 350 370 358 400 366C480 385 600 405 698 413C820 424 900 427 1004 427"/>
<path d="M898 245C960 285 1020 340 1045 385C1080 440 1094 480 1094 535M994 278C994 320 975 340 975 385M1004 427C1020 465 1034 490 1034 535"/>
<path d="M178 233C150 255 144 280 144 305M178 236C160 300 157 350 155 395M157 432L155 482M228 223C190 280 172 330 160 395M307 250C250 280 215 440 201 568M268 250C264 270 262 285 262 305M212 371C212 350 238 345 242 325C250 295 275 270 290 250M269 290V546"/>
<path d="M504 228C504 270 485 300 480 376M504 282L461 294M558 258C520 262 500 320 480 376M504 232C470 300 450 400 450 488M480 412C470 460 466 520 465 558"/>
<path d="M713 233C690 250 680 270 680 302M787 284V345M794 333C775 340 750 355 748 380M794 356C820 356 842 372 842 372C856 385 857 395 857 411M748 385C760 430 800 455 837 455M800 290C790 380 712 440 709 579M812 250C795 330 790 420 788 490M806 290C810 400 880 430 884 554"/>
<path stroke-width="4" d="M748 348V543"/>
${[[162,217,0],[383,217,180],[430,217,0],[648,217,180],[698,217,0],[686,217,180],[916,217,180],[981,217,0],[1000,217,180],[269,289,-90],[5,288,-90],[5,302,90],[5,475,90],[806,290,-90],[748,384,-90],[748,410,90],[748,500,90],[857,411,90],[1094,537,90],[800,340,180]].map(a=>arrow(...a)).join('')}
<circle cx="30" cy="364" r="5" fill="${WIRE}"/>
${dots([[55,188],[55,244],[81,261],[187,223],[177,201],[178,217],[178,233],[177,275],[228,223],[332,159],[319,159],[341,159],[212,371],[307,249],[58,429],[58,575],[269,459],[269,546],[445,201],[445,217],[446,233],[445,275],[504,228],[504,282],[558,258],[587,159],[601,159],[614,159],[707,188],[707,201],[713,233],[713,276],[787,284],[748,348],[748,374],[794,333],[794,356],[874,184],[855,159],[876,159],[991,188],[991,201],[991,217],[997,231],[994,278],[842,372],[1004,352],[1115,352],[749,459],[749,543],[837,455],[1004,427],[884,554]])}</g>`));

const at=(x,y,w,h)=>`style="--x:${x};--y:${y}${w?`;--w:${w};--h:${h}`:''}"`;
const LABELS=[[162,132,'Dashboard'],[430,132,'Analytics'],[698,132,'Admin'],[981,132,'Profile'],[162,292,'Add new t...'],[279,292,'Notes po...'],[173,381,'Finished Tasks'],[173,467,'Cancelled Tasks'],[219,554,'Schedule ...'],[480,285,'Study Time vs. ...'],[501,361,'Total stud...'],[470,474,'Focus Efficiency'],[484,544,'Number of Stu...'],[698,287,'Manage u...'],[809,291,'View user...'],[994,297,'Save c...'],[1105,297,'Change...'],[994,372,'Logout'],[1105,372,'Admin r...'],[704,396,'Manage ...'],[811,396,'Reset us...'],[994,452,'Admin r...'],[1105,452,'Admin r...'],[702,485,'Delete u...'],[807,476,'Add new t...'],[1054,522,'Notifica...'],[728,565,'Total Session ...'],[0,460,'ord']];
const FRAMES=[['dashboard',162,147,218,142,1],['analytics',430,147,218,142,1],['admin',698,147,218,142,1],['profile',981,147,218,142,1],['login',0,146,112,142,1],['signup',3,311,112,142,1],['recover',3,475,112,142,1],['addtask',163,307,101,75],['notes',279,307,101,75],['schedule',219,569,101,83],['useraction',698,302,100,82],['viewuser',807,306,100,74],['manage',703,411,90,64],['reset',811,411,92,54],['del',701,500,92,54],['addtask',807,490,101,75],['confirm',994,312,83,47],['photo',1104,312,83,47],['logout',994,388,83,47],['request',1104,388,83,47],['areq',994,467,83,47],['check',1104,467,83,47],['none',1053,537,83,47]];
const CARDS=[['finished',173,396,193,72],['cancelled',173,482,193,73],['vs',480,299,139,57],['week',499,376,100,93],['focus',468,489,162,50],['number',483,558,140,93],['total',728,579,139,94]];
const BADGES=[[126,307],[242,307],[137,396],[137,482],[183,569],[443,298],[662,302],[462,376],[431,488],[447,558],[691,579],[770,490],[958,387],[1017,537]];

const chev=`<chevron-down></chevron-down>`, S='stroke="#fff" stroke-width="1.500"';
define('tool-bar', `
:host{display:flex;align-items:center;height:72px;padding:0 18px 0 12px;border-radius:20px;background:#2c2c2c;border:1px solid #3d3d3d;box-shadow:0 3px 12px #0007}
.t{width:48px;height:48px;border-radius:8px}.on{background:#0c8ce9}
.c{width:28px;height:48px;margin-right:9px}.p{margin-right:12px}
.bar{width:1px;height:70px;background:#444;margin:0 18px 0 1px}
.tog{width:60px;height:36px;border-radius:8px;background:#383838;justify-content:flex-start}
.tog span{width:34px;height:34px;border-radius:8px;background:#2c2c2c;border:1px solid #444;display:grid;place-items:center}`,
`<button class="t on" aria-label="Move">${svg(26,26,`<path d="M2 2l22 8-10 4-4 10z" ${S}/>`)}</button><button class="c" aria-label="Move tools">${chev}</button>
<button class="t" aria-label="Brush">${svg(28,26,`<path d="M8 17L22 3q3-2 3 1L12 19q-1 5-11 5 5-2 4-5 1-3 3-2zM8 17l4 2" ${S}/>`)}</button><button class="c" aria-label="Draw tools">${chev}</button>
<button class="t" aria-label="Rectangle">${svg(26,26,`<rect x="1" y="1" width="24" height="24" rx="1" ${S}/>`)}</button><button class="c" aria-label="Shape tools">${chev}</button>
<button class="t" aria-label="Pen">${svg(26,26,`<path d="M2 2q18 2 20 9l1 7-5 5-7-1Q3 20 2 2zM2 2l10 10M19 22l4-4 2 4-3 3z" ${S}/><circle cx="13" cy="12" r="2" ${S}/>`)}</button><button class="c" aria-label="Pen tools">${chev}</button>
<button class="t p" aria-label="Text">${svg(24,24,`<path d="M1 5V1h22v4M12 1v22M8 23h8" ${S}/>`)}</button><button class="t p" aria-label="Comment">${svg(26,26,`<path d="M2 24V13A11.500 11.500 0 1113 24z" ${S}/>`)}</button><button class="t p" aria-label="Actions">${svg(26,26,`<path d="M6 1l5 5-5 5-5-5zM20 15v10M15 20h10" ${S}/><circle cx="20" cy="6" r="4.500" ${S}/><rect x="2" y="15" width="9" height="9" rx="2" ${S}/>`)}</button><span class="bar"></span><button class="tog" role="switch" aria-label="Dev mode"><span>${svg(24,14,`<path d="M6 2L1 7l5 5M18 2l5 5-5 5M14 1l-4 12" ${S}/>`)}</span></button>`);

define('design-canvas', `
:host{display:block;flex:1;position:relative;overflow:hidden;background:#575757}
tool-bar{position:absolute;bottom:17px;left:50%;transform:translateX(-50%)}
.strip{position:absolute;left:0;top:311px;width:3px;height:305px;background:${G}}
.scroll{position:absolute;left:102px;right:15px;bottom:4px;height:9px;border-radius:5px;background:#404040;border:1px solid #9a9a9a}`,
 LABELS.map(l=>`<frame-label ${at(l[0],l[1])}>${l[2]}</frame-label>`).join('')+`<div class="strip"></div>`+
 FRAMES.map(f=>`<art-frame art="${f[0]}" ${f[5]?'square':''} ${at(f[1],f[2],f[3],f[4])}></art-frame>`).join('')+
 CARDS.map(f=>`<table-card data="${f[0]}" ${at(f[1],f[2],f[3],f[4])}></table-card>`).join('')+
 `<proto-wires></proto-wires>`+BADGES.map(b=>`<overlay-badge ${at(...b)}></overlay-badge>`).join('')+
 `<comment-pin ${at(110,250)}></comment-pin><comment-pin many ${at(293,207)}></comment-pin><comment-pin ${at(564,184)}></comment-pin><comment-pin many ${at(853,226)}></comment-pin><comment-pin ${at(1123,233)}></comment-pin><div class="scroll"></div><tool-bar></tool-bar>`);
define('figma-app', `:host{display:flex;flex:1;min-height:0;border-bottom:2px solid #444}`, `<left-panel></left-panel><design-canvas></design-canvas><right-panel></right-panel>`);

/* ---------- taskbar ---------- */
const APPS=[
['Task view','<rect x="9" y="3" width="26" height="25" rx="2" fill="#f2f2f2"/><rect x="1" y="12" width="26" height="24" rx="2" fill="#777" fill-opacity=".85"/>'],
['Copilot','<defs><linearGradient id="c1" y2="1"><stop stop-color="#1a6fe0"/><stop offset=".5" stop-color="#20b8a8"/><stop offset="1" stop-color="#f5d02c"/></linearGradient><linearGradient id="c2" y2="1"><stop stop-color="#9a5cf0"/><stop offset=".5" stop-color="#ef5b9a"/><stop offset="1" stop-color="#ff9d55"/></linearGradient></defs><path d="M10 3h11q3 0 4 4l1 5h-5q-3 0-4 4l-3 10q-1 3-4 3H7q-6 0-5-6L5 9q1-6 5-6z" fill="url(#c1)"/><path d="M27 34H16q-3 0-4-4l-1-3h6q3 0 4-4l3-9q1-3 4-3h2q6 0 5 6l-3 11q-1 6-5 6z" fill="url(#c2)"/>'],
['MATLAB','<path d="M1 21l15-5L34 1 22 23l-11 3z" fill="#e9a06a"/><path d="M34 1q-6 12-4 20l5 3-5 1 4 11q-8-7-11-9l-10 7q0-6-4-9l12-4z" fill="#ff6a1a"/>'],
['Calculator','<rect x="5" y="1" width="27" height="35" rx="3" fill="#737f8c"/><rect x="8" y="4" width="21" height="6" rx="1" fill="#53d7ff"/><g fill="#dfe5ea"><rect x="8" y="13" width="5" height="5"/><rect x="16" y="13" width="5" height="5"/><rect x="24" y="13" width="5" height="5"/><rect x="8" y="21" width="5" height="5"/><rect x="16" y="21" width="5" height="5"/><rect x="8" y="29" width="5" height="5"/><rect x="16" y="29" width="5" height="5"/></g><rect x="24" y="21" width="5" height="13" fill="#12508c"/>'],
['Notepad','<rect x="5" y="3" width="28" height="33" rx="2" fill="#58c9e8"/><path d="M5 31h28v5H5z" fill="#c26417"/><path d="M5 29h28v2H5z" fill="#fff"/><path d="M10 12h17M10 17h17M10 22h17" stroke="#0e6c8c" stroke-width="2"/><path d="M8 1v4M13 1v4M18 1v4M23 1v4M28 1v4" stroke="#0e7c9c" stroke-width="2"/>'],
['Chrome','<circle cx="19" cy="20" r="17.500" fill="#fbc116"/><path d="M4 11a17.500 17.500 0 0130 0H19z" fill="#e33b2e"/><path d="M4 11a17.500 17.500 0 0015 26.500L26.500 24 19 20z" fill="#2da94f"/><circle cx="19" cy="20" r="8.500" fill="#fff"/><circle cx="19" cy="20" r="7" fill="#3f83f4"/><g transform="translate(20 -7) scale(.8)">'+FACE+'</g>'],
['File Explorer','<path d="M1 4q0-2 2-2h9l4 4h17v8H1z" fill="#d99600"/><rect x="1" y="7" width="36" height="28" rx="2" fill="#ffcf48"/><path d="M7 35v-8q0-4 4-4h15q4 0 4 4v8z" fill="#1377d1"/><path d="M13 29h12" stroke="#0a4f96" stroke-width="2"/>'],
['VS Code','<path d="M27 26L6 9 2 11v4l24 21z" fill="#1b8fe0"/><path d="M27 11L6 28l-4-2v-4L26 1z" fill="#0a72bd"/><path d="M26 1l10 5v26l-10 5z" fill="#29a8f5"/>'],
['Arduino','<rect x="2" y="2" width="33" height="33" rx="6" fill="#1b9ba0"/><g stroke="#fff" stroke-width="2"><circle cx="13" cy="18.500" r="5"/><circle cx="24" cy="18.500" r="5"/></g>'],
['Notion','<path d="M4 6l20-2 8 5v25l-20 1-8-6z" fill="#fff" stroke="#000"/><path d="M11 11l20-1v23l-20 1z" fill="#fff" stroke="#000" stroke-width="2"/><path d="M16 28V16l10 12V15" stroke="#000" stroke-width="3"/>'],
['Paint','<path d="M21 1C9 2 2 12 2 23c0 8 5 7 9 8 4 2 2 6 8 6 10 0 17-9 17-19S30 1 21 1z" fill="#35b4f0"/><circle cx="21" cy="8" r="4" fill="#f5a623"/><circle cx="12" cy="12" r="3.500" fill="#31a84e"/><circle cx="8" cy="20" r="3.500" fill="#e6452e"/><circle cx="20" cy="22" r="3.500" fill="#16384d"/><path d="M26 11h7l-1 9h-5z" fill="#f7d9a8"/><path d="M28 20h3v14q-1 3-3 0z" fill="#c47b1c"/>']];
define('task-bar', `
:host{display:flex;align-items:center;height:70px;background:linear-gradient(90deg,#1f2427,#26241f 42%,#262626 55%,#232525);padding:0 29px 0 15px;font-size:17px;line-height:24px}
.app{width:66px;height:60px;position:relative}
.app.on::before{content:"";position:absolute;inset:0 3px;border-radius:8px;background:#fff1;border:1px solid #fff1}
.app.on::after,.app.dot::after{content:"";position:absolute;bottom:1px;left:21px;width:24px;height:4px;border-radius:2px;background:#a9c6cd}
.app.dot::after{left:29px;width:8px;background:#9a9a9a}.app svg{position:relative;overflow:visible}
.search{display:flex;align-items:center;width:329px;height:48px;margin:0 5px 0 5px;border-radius:24px;background:#3f4143;border:1px solid #56585a;padding:0 2px 0 16px}
input{flex:1;min-width:0;border:0;background:none;color:#fff;font:18px "Open Sans",sans-serif;padding:0 14px;outline:0}input::placeholder{color:#d4d4d4}
.weather{margin-left:auto;gap:9px;text-align:left;font-size:18px}.weather small{font-size:18px;color:#bdbdbd}.weather span{display:block}
.lang{margin:0 22px 0 26px;text-align:center;width:46px}.tray{gap:11px;margin-right:28px}.time{text-align:right}`,
`<button class="app" aria-label="Start">${svg(36,36,'<g fill="#3db8fa"><rect width="17" height="17" rx="1" fill="#6fd3ff"/><rect x="18.500" width="17" height="17" rx="1" fill="#5ac6fb"/><rect y="18.500" width="17" height="17" rx="1"/><rect x="18.500" y="18.500" width="17" height="17" rx="1" fill="#1a9ff5"/></g>')}</button>
<label class="search">${svg(24,24,'<circle cx="11" cy="10" r="8.500" stroke="#e3e3e3" stroke-width="2"/><path d="M17 17l5 6" stroke="#e3e3e3" stroke-width="2.500"/>')}<input aria-label="Search" placeholder="Search">${svg(76,40,'<path d="M12 22q26-22 56-2v16H14z" fill="#7f9a35"/><path d="M56 36l4-20 4-2 1 8 4-12 4 1-1 14-5 13z" fill="#f3bd96"/><path d="M2 22l3-4 4 8 3-16 5-3 3 20 3-21 5-3 1 24 5-22 5-2 0 23 6-21 5-1-2 24q-3 14-12 14H13Q3 36 2 22z" fill="#ee9346"/><path d="M2 28q5-5 11-3l14-1 14 2 11-2q-3 16-12 16H13Q3 37 2 28z" fill="#cf6430"/><path d="M12 27q4 4 3 12M26 26q3 5 1 13M39 27q1 6-3 12M9 20l1 5M21 17l0 7M33 14v8M44 14l-1 8" stroke="#9f4220" stroke-width="1.500"/>')}</label>
${APPS.map(([n,s])=>`<button class="app${n==='Chrome'?' on':n==='MATLAB'?' dot':''}" aria-label="${n}">${svg(38,38,s)}</button>`).join('')}
<button class="weather">${svg(40,52,'<circle cx="30" cy="32" r="9" fill="#ff8a1f"/><circle cx="19" cy="31" r="11" fill="#9fc0fb"/><rect x="1" y="32" width="38" height="16" rx="8" fill="#bcd5ff"/><circle cx="28" cy="13" r="12" fill="#ff9aa5"/><text x="28" y="19" text-anchor="middle" font-size="16" fill="#000">8</text>')}<span>25°C<span><small>Mostly cloudy</small></span></span></button>
<button style="margin-left:84px" aria-label="Hidden icons">${svg(16,10,'<path d="M1 9l7-7 7 7" stroke="#fff" stroke-width="2"/>')}</button>
<button class="lang">ENG<br>US</button>
<button class="tray" aria-label="Network, sound, battery">${svg(24,20,'<g stroke="#fff" stroke-width="2"><path d="M1 7q11-10 22 0M4.500 11q7.500-7 15 0M8 14.500q4-4 8 0"/></g><circle cx="12" cy="17" r="2.500" fill="#fff"/>')}${svg(24,20,'<path d="M1 7h4l6-5v16l-6-5H1zM16 7l6 6M22 7l-6 6" stroke="#fff" stroke-width="1.700"/>')}${svg(26,22,'<rect x="3" y="6" width="19" height="13" rx="3" stroke="#fff" stroke-width="2"/><rect x="6" y="9" width="13" height="7" fill="#fff"/><path d="M24 10v5" stroke="#fff" stroke-width="3"/><path d="M6 0L1 8h4l-1 6 5-8H5z" fill="#fff" stroke="#262626"/>')}</button>
<button class="time">12:36 pm<br>25/02/2025</button>`);
</script>
</body>
</html>
